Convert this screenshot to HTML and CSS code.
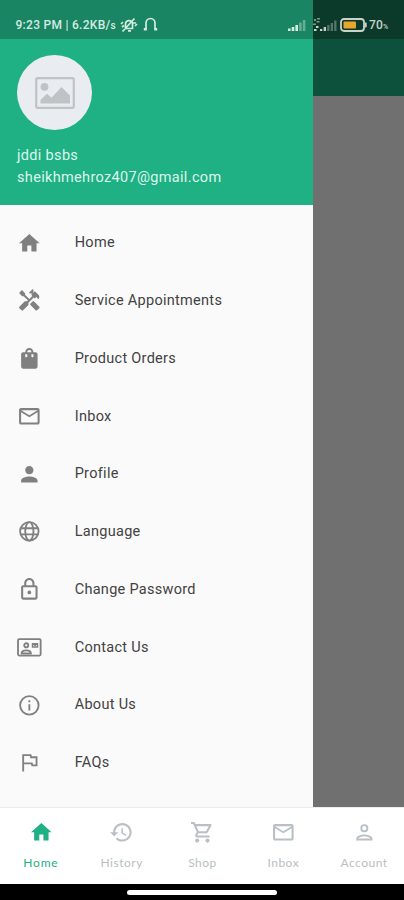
FILE: index.html
```html
<!DOCTYPE html>
<html lang="en">
<head>
  <meta charset="UTF-8" />
  <title>Home</title>
  <meta name="viewport" content="width=device-width, initial-scale=1.0" />
  <link rel="stylesheet" href="styles.css">
</head>
<body>
  <div class="screen">
    <div class="main">
      <aside class="drawer">
        <div class="status status-left">
          <span class="clock">9:23 PM | 6.2KB/<small>s</small></span>
          <svg class="mute" viewBox="0 0 18 16" width="18" height="16" fill="none" stroke="currentColor" stroke-width="1.7">
            <path d="M4.5 11.5h8.800M5.500 11V7a3.600 3.600 0 0 1 7-1v5M8 13.800h3M2.500 14.500 14.500 1.500M1 7l2-2M15 9l2-2M2 10l2-1.500M13 6h3" />
          </svg>
          <svg class="headset" viewBox="0 0 15 15" width="15" height="15" fill="none" stroke="currentColor" stroke-width="1.7">
            <path d="M3 12.500V6.300a4.500 4.800 0 0 1 9 0v6.200" />
            <path d="M.8 12.300h3M11.200 12.300h3" stroke-width="2.400" />
          </svg>
          <svg class="signal" viewBox="0 0 18 12" width="18" height="12" fill="currentColor">
            <path d="M0 9.500h2.600V12H0zM3.700 8h2.600v4H3.700zM7.400 6H10v6H7.400z" />
            <path opacity=".4" d="M11.100 3.500h2.600V12h-2.600zM14.800 1h2.600v11h-2.600z" />
          </svg>
        </div>

        <div class="profile">
          <div class="avatar">
            <svg viewBox="0 0 40 32" width="40" height="32">
              <rect x="1.200" y="1.200" width="37.600" height="29.600" rx="1.500" fill="none" stroke="#bfc3c6" stroke-width="2.200" />
              <circle cx="9.500" cy="9.800" r="3.900" fill="#bfc3c6" />
              <path d="M5.500 26.500v-3.700l6.500-6 4.500 4L26.500 10l8.500 8.500v8z" fill="#bfc3c6" />
            </svg>
          </div>
          <div class="name">jddi bsbs</div>
          <div class="email">sheikhmehroz407@gmail.com</div>
        </div>

        <nav class="menu">
          <a class="item">
            <svg class="icon" viewBox="0 0 24 24"><path d="M10 20v-6h4v6h5v-8h3L12 3 2 12h3v8z" /></svg>
            <span>Home</span>
          </a>
          <a class="item">
            <svg class="icon" viewBox="0 0 24 24"><path d="m21.670 18.170-5.300-5.300h-.99l-2.540 2.540v.99l5.300 5.300c.39.39 1.020.39 1.410 0l2.120-2.120c.39-.38.39-1.020 0-1.410z" /><path d="m17.340 10.190 1.410-1.410 2.120 2.120c1.170-1.170 1.170-3.070 0-4.240l-3.540-3.540-1.410 1.410V1.710L15.220 1l-3.540 3.540.71.710h2.830l-1.410 1.410 1.060 1.060-2.890 2.890-4.130-4.130V5.060L4.830 2.040 2 4.870 5.030 7.900h1.410l4.130 4.130-.85.850H7.600l-5.300 5.300c-.39.39-.39 1.020 0 1.410l2.120 2.120c.39.39 1.020.39 1.410 0l5.300-5.300v-2.120l5.150-5.150z" /></svg>
            <span>Service Appointments</span>
          </a>
          <a class="item">
            <svg class="icon" viewBox="0 0 24 24"><path fill-rule="evenodd" d="M18 6h-2c0-2.210-1.790-4-4-4S8 3.790 8 6H6c-1.100 0-2 .9-2 2v12c0 1.100.9 2 2 2h12c1.100 0 2-.9 2-2V8c0-1.100-.9-2-2-2zm-8 4c0 .55-.45 1-1 1s-1-.45-1-1V8h2zm2-6c1.100 0 2 .9 2 2h-4c0-1.100.9-2 2-2zm4 6c0 .55-.45 1-1 1s-1-.45-1-1V8h2z" /></svg>
            <span>Product Orders</span>
          </a>
          <a class="item">
            <svg class="icon" viewBox="0 0 24 24"><path d="M22 6c0-1.100-.9-2-2-2H4c-1.100 0-2 .9-2 2v12c0 1.100.9 2 2 2h16c1.100 0 2-.9 2-2zm-2 0-8 5-8-5zm0 12H4V8l8 5 8-5z" /></svg>
            <span>Inbox</span>
          </a>
          <a class="item">
            <svg class="icon" viewBox="0 0 24 24"><path d="M12 12c2.210 0 4-1.790 4-4s-1.790-4-4-4-4 1.790-4 4 1.790 4 4 4zm0 2c-2.670 0-8 1.340-8 4v2h16v-2c0-2.660-5.330-4-8-4z" /></svg>
            <span>Profile</span>
          </a>
          <a class="item">
            <svg class="icon line" viewBox="0 0 24 24"><circle cx="12" cy="12" r="9" /><ellipse cx="12" cy="12" rx="4" ry="9" /><path d="M4 9h16M4 15h16" /></svg>
            <span>Language</span>
          </a>
          <a class="item">
            <svg class="icon" viewBox="0 0 24 24"><path fill-rule="evenodd" d="M18 8h-1V6c0-2.760-2.240-5-5-5S7 3.240 7 6v2H6c-1.100 0-2 .9-2 2v10c0 1.100.9 2 2 2h12c1.100 0 2-.9 2-2V10c0-1.100-.9-2-2-2zM9 6c0-1.660 1.340-3 3-3s3 1.340 3 3v2H9zm9 14H6V10h12z" /><circle cx="12" cy="15" r="1.800" /></svg>
            <span>Change Password</span>
          </a>
          <a class="item">
            <svg class="icon line" viewBox="0 0 24 24"><rect x="1" y="4" width="22" height="16" rx="1.200" /><circle cx="9" cy="10" r="2" /><path d="M4.500 18c0-2 2.300-3 4.500-3s4.500 1 4.500 3z" /><path d="M15 8.500v3.200h5V8.500zl2.500 1.700L20 8.500" stroke-width="1.300" /></svg>
            <span>Contact Us</span>
          </a>
          <a class="item">
            <svg class="icon line" viewBox="0 0 24 24"><circle cx="12" cy="12" r="9" /><path d="M12 11v6M12 7v2" /></svg>
            <span>About Us</span>
          </a>
          <a class="item">
            <svg class="icon line" viewBox="0 0 24 24"><path d="M6 21V5h7.200l.4 2H19v8h-4.200l-.4-2H6" /></svg>
            <span>FAQs</span>
          </a>
        </nav>
      </aside>

      <div class="behind">
        <div class="status status-right">
          <svg class="signal-4g" viewBox="0 0 24 15" width="24" height="15" fill="currentColor">
            <path opacity=".6" d="M1 2h2v2H1zM4 1h3v1.500H4zM3.500 4h3v1.500h-3zM0 6.500h3V8H0z" />
            <path d="M1 12h2.500v2H1zM7 12h2.300v2H7zM3 9h2.500v2H3zM10.700 10H13v4h-2.300z" />
            <path opacity=".4" d="M14.200 8h2.300v6h-2.300zM17.700 6H20v8h-2.300zM21.200 3.500h2.300V14h-2.300z" />
          </svg>
          <svg class="battery" viewBox="0 0 27 14" width="27" height="14">
            <rect x="1" y="1" width="23" height="12" rx="3" fill="none" stroke="#c9d2cb" stroke-width="1.800" />
            <rect x="3.500" y="3.500" width="12.500" height="7" rx="1" fill="#e9a62b" />
            <path d="M24.500 4.500h1.200q1 0 1 1v3q0 1-1 1h-1.200z" fill="#c9d2cb" />
          </svg>
          <span class="percent">70<small>%</small></span>
        </div>
        <div class="appbar"></div>
      </div>
    </div>

    <nav class="tabs">
      <a class="tab active">
        <svg class="icon" viewBox="0 0 24 24"><path d="M10 20v-6h4v6h5v-8h3L12 3 2 12h3v8z" /></svg>
        <span>Home</span>
      </a>
      <a class="tab">
        <svg class="icon" viewBox="0 0 24 24"><path d="M13 3c-4.970 0-9 4.030-9 9H1l3.890 3.890.07.14L9 12H6c0-3.870 3.130-7 7-7s7 3.130 7 7-3.130 7-7 7c-1.930 0-3.680-.79-4.940-2.060l-1.420 1.420C8.270 19.990 10.510 21 13 21c4.970 0 9-4.030 9-9s-4.030-9-9-9zm-1 5v5l4.280 2.540.72-1.210-3.500-2.080V8z" /></svg>
        <span>History</span>
      </a>
      <a class="tab">
        <svg class="icon" viewBox="0 0 24 24"><path fill-rule="evenodd" d="M15.550 13c.75 0 1.410-.41 1.750-1.030l3.580-6.490c.37-.66-.11-1.480-.87-1.480H5.210l-.94-2H1v2h2l3.600 7.590-1.350 2.440C4.520 15.370 5.480 17 7 17h12v-2H7l1.100-2zM6.160 6h12.150l-2.760 5H8.530z" /><circle cx="7" cy="20" r="2" /><circle cx="17" cy="20" r="2" /></svg>
        <span>Shop</span>
      </a>
      <a class="tab">
        <svg class="icon" viewBox="0 0 24 24"><path d="M22 6c0-1.100-.9-2-2-2H4c-1.100 0-2 .9-2 2v12c0 1.100.9 2 2 2h16c1.100 0 2-.9 2-2zm-2 0-8 5-8-5zm0 12H4V8l8 5 8-5z" /></svg>
        <span>Inbox</span>
      </a>
      <a class="tab">
        <svg class="icon line" viewBox="0 0 24 24"><circle cx="12" cy="8" r="3" /><path d="M5 19v-1c0-1.800 4.200-3 7-3s7 1.200 7 3v1z" /></svg>
        <span>Account</span>
      </a>
    </nav>

    <div class="gesture">
      <div class="pill"></div>
    </div>
  </div>
</body>
</html>
```

FILE: styles.css
```css
* {
  box-sizing: border-box;
}
body {
  margin: 0;
  font-family: Roboto, sans-serif;
}
.screen {
  display: flex;
  flex-direction: column;
  width: 404px;
  height: 900px;
  overflow: hidden;
}
.main {
  display: flex;
  height: 807px;
}

/* drawer */
.drawer {
  width: 313px;
  background: #fafafa;
}
.status {
  display: flex;
  align-items: center;
  height: 39px;
  padding-top: 10px;
  color: #d5ebe2;
  font-size: 12px;
  font-weight: 500;
}
.status small {
  font-size: 10px;
}
.status-left {
  padding-left: 15.5px;
  padding-right: 7px;
  background: #198562;
}
.clock {
  width: 104px;
  letter-spacing: 0.28px;
  white-space: nowrap;
}
.headset {
  margin-left: 5px;
}
.signal {
  margin-left: auto;
}
.profile {
  height: 166px;
  padding: 16px 17px 0;
  background: #1fb083;
  color: #dcf7ed;
  font-size: 14.5px;
  line-height: 21.5px;
  letter-spacing: 0.33px;
}
.avatar {
  display: flex;
  align-items: center;
  justify-content: center;
  width: 75px;
  height: 75px;
  margin-bottom: 15px;
  border-radius: 50%;
  background: #e9edf1;
}
.menu {
  padding-top: 9px;
}
.item {
  display: flex;
  align-items: center;
  height: 57.75px;
  padding-left: 17px;
  color: #424242;
  font-size: 14.5px;
  letter-spacing: 0.29px;
}
.item span {
  margin-left: 33px;
}
.icon {
  width: 24.7px;
  height: 24.7px;
  fill: currentColor;
}
.item .icon {
  color: #808080;
}
.icon.line {
  fill: none;
  stroke: currentColor;
  stroke-width: 1.8;
}

/* dimmed page under the drawer */
.behind {
  flex: 1;
  background: #707070;
}
.status-right {
  background: #0b3a2b;
  color: #c9d2cb;
}
.battery {
  margin-left: 3px;
}
.percent {
  margin-left: 2px;
  letter-spacing: 0.2px;
}
.percent small {
  font-size: 7px;
}
.appbar {
  height: 57px;
  background: #0d503b;
}

/* bottom bar */
.tabs {
  display: flex;
  height: 77px;
  border-top: 1px solid #ececec;
  background: #fff;
}
.tab {
  flex: 1;
  display: flex;
  flex-direction: column;
  align-items: center;
  padding-top: 12px;
  padding-left: 1px;
  color: #b9c0c3;
  font-family: Lato, sans-serif;
  font-size: 12px;
  letter-spacing: 0.5px;
}
.tab span {
  margin-top: 10px;
}
.tab.active {
  color: #1fb083;
}
.tab.active span {
  letter-spacing: 0.8px;
}
.gesture {
  display: flex;
  justify-content: center;
  height: 16px;
  padding-top: 6px;
  background: #000;
}
.pill {
  width: 150px;
  height: 5px;
  border-radius: 3px;
  background: #fff;
}
```
